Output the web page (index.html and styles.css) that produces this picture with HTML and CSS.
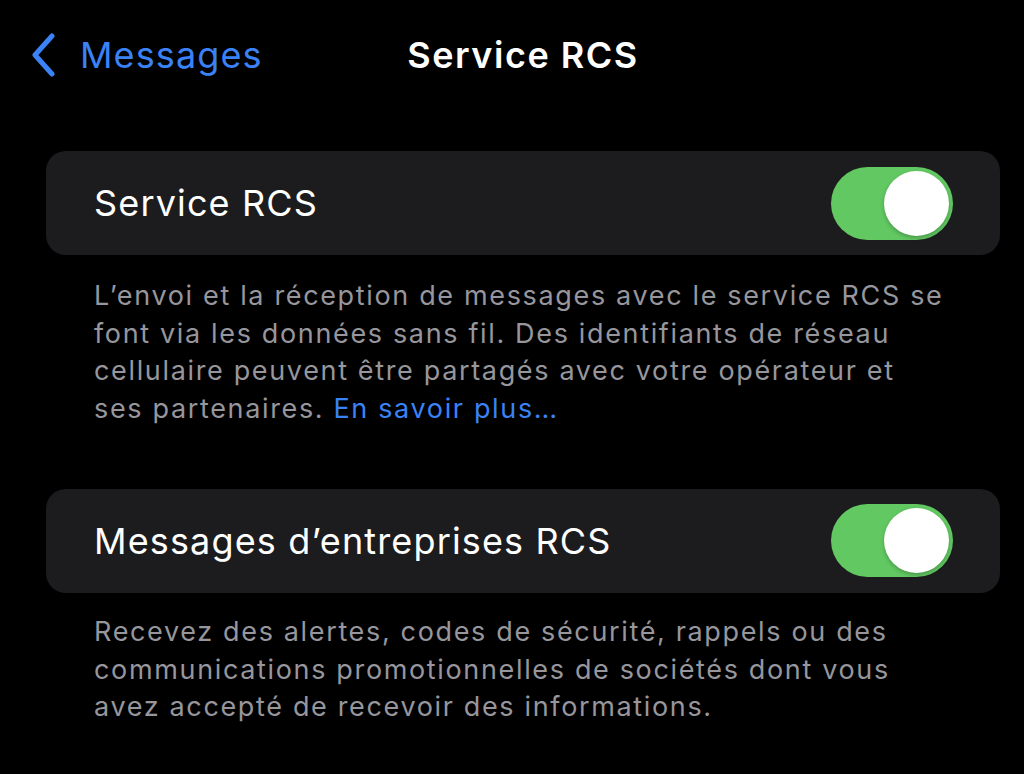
FILE: index.html
```html
<!DOCTYPE html>
<html lang="fr">
<head>
<meta charset="utf-8">
<link rel="stylesheet" href="styles.css">
</head>
<body>
<header class="nav">
  <a class="back">
    <svg class="chev" width="26" height="44" viewBox="0 0 26 44"><path d="M22 3 L5 22 L22 41" fill="none" stroke="#3a82f6" stroke-width="5" stroke-linecap="round" stroke-linejoin="round"/></svg>
    <span>Messages</span>
  </a>
  <h1 class="title">Service RCS</h1>
  <div></div>
</header>
<main class="content">
  <section class="card">
    <span class="label">Service RCS</span>
    <span class="toggle"><span class="knob"></span></span>
  </section>
  <p class="footer">L’envoi et la réception de messages avec le service RCS se<br>font via les données sans fil. Des identifiants de réseau<br>cellulaire peuvent être partagés avec votre opérateur et<br>ses partenaires. <a class="link">En savoir plus…</a></p>
  <section class="card second">
    <span class="label">Messages d’entreprises RCS</span>
    <span class="toggle"><span class="knob"></span></span>
  </section>
  <p class="footer">Recevez des alertes, codes de sécurité, rappels ou des<br>communications promotionnelles de sociétés dont vous<br>avez accepté de recevoir des informations.</p>
</main>
</body>
</html>
```
FILE: styles.css
```css
html, body {
  margin: 0;
  background: #000;
  font-family: Inter, "Noto Sans", sans-serif;
  color: #fff;
}
.nav {
  display: grid;
  grid-template-columns: 1fr auto 1fr;
  align-items: center;
  height: 110px;
  padding-left: 22px;
}
.back {
  display: flex;
  align-items: center;
  gap: 24px;
  color: #3a82f6;
  font-size: 36px;
  letter-spacing: 1.1px;
  padding-left: 8px;
}
.chev { display: block; }
.title {
  margin: 0;
  font-size: 36px;
  font-weight: 600;
  letter-spacing: 1.5px;
}
.content {
  padding: 41px 24px 0 46px;
}
.card {
  background: #1c1c1e;
  border-radius: 20px;
  height: 104px;
  display: flex;
  align-items: center;
  justify-content: space-between;
  padding: 0 48px;
  box-sizing: border-box;
}
.label {
  font-size: 36px;
  letter-spacing: 1.15px;
}
.toggle {
  width: 122px;
  height: 73px;
  border-radius: 37px;
  background: #62c962;
  display: flex;
  align-items: center;
  justify-content: flex-end;
  padding: 0 4px;
  box-sizing: border-box;
  margin-right: -1px;
}
.knob {
  width: 65px;
  height: 65px;
  border-radius: 50%;
  background: #fff;
  box-shadow: 0 2px 4px rgba(0,0,0,0.25);
}
.footer {
  margin: 22px 0 0;
  padding: 0 0 0 48px;
  font-size: 27px;
  letter-spacing: 1.65px;
  line-height: 37.7px;
  color: #96969c;
  white-space: nowrap;
}
.link { color: #3a82f6; }
.second { margin-top: 61px; }
.second + .footer { margin-top: 20px; }
```
